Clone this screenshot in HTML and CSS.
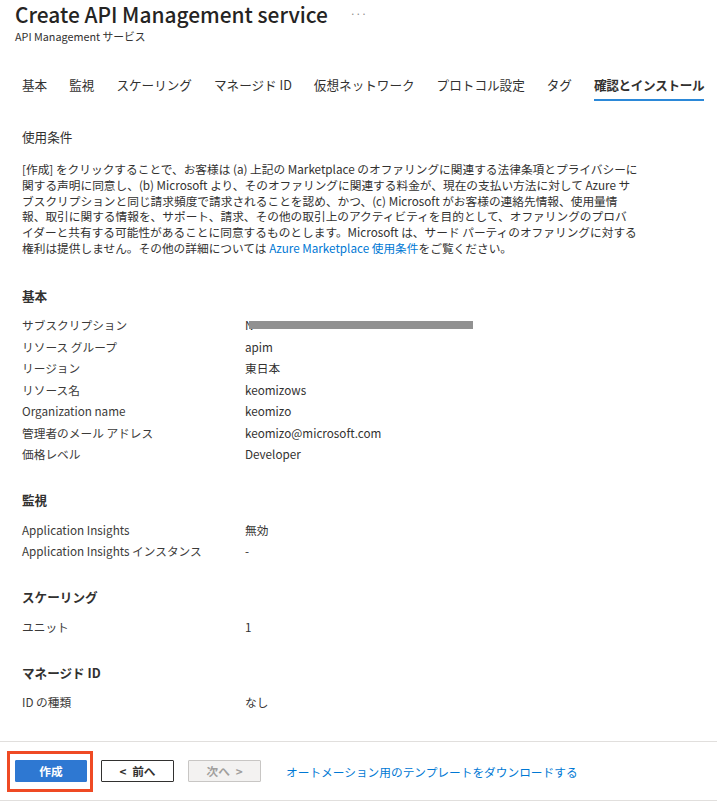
FILE: index.html
```html
<!DOCTYPE html>
<html lang="ja">
<head>
<meta charset="utf-8">
<title>Create API Management service</title>
<link rel="stylesheet" href="styles.css">
</head>
<body>
<div class="page">
  <header class="header">
    <div class="title-row">
      <h1 class="title">Create API Management service</h1>
      <span class="more">···</span>
    </div>
    <div class="subtitle">API Management サービス</div>
  </header>

  <nav class="tabs">
    <span class="tab">基本</span>
    <span class="tab">監視</span>
    <span class="tab">スケーリング</span>
    <span class="tab">マネージド ID</span>
    <span class="tab">仮想ネットワーク</span>
    <span class="tab">プロトコル設定</span>
    <span class="tab">タグ</span>
    <span class="tab active">確認とインストール</span>
  </nav>

  <main class="content">
    <div class="terms-title">使用条件</div>
    <p class="terms">[作成] をクリックすることで、お客様は (a) 上記の Marketplace のオファリングに関連する法律条項とプライバシーに<br>関する声明に同意し、(b) Microsoft より、そのオファリングに関連する料金が、現在の支払い方法に対して Azure サ<br>ブスクリプションと同じ請求頻度で請求されることを認め、かつ、(c) Microsoft がお客様の連絡先情報、使用量情<br>報、取引に関する情報を、サポート、請求、その他の取引上のアクティビティを目的として、オファリングのプロバ<br>イダーと共有する可能性があることに同意するものとします。Microsoft は、サード パーティのオファリングに対する<br>権利は提供しません。その他の詳細については <a class="link" href="#">Azure Marketplace 使用条件</a>をご覧ください。</p>

    <section class="section first">
      <h2 class="section-title">基本</h2>
      <div class="rows">
        <div class="label">サブスクリプション</div><div class="value"><span class="n">N</span><span class="redact"></span></div>
        <div class="label">リソース グループ</div><div class="value">apim</div>
        <div class="label">リージョン</div><div class="value">東日本</div>
        <div class="label">リソース名</div><div class="value">keomizows</div>
        <div class="label">Organization name</div><div class="value">keomizo</div>
        <div class="label">管理者のメール アドレス</div><div class="value">keomizo@microsoft.com</div>
        <div class="label">価格レベル</div><div class="value">Developer</div>
      </div>
    </section>

    <section class="section">
      <h2 class="section-title">監視</h2>
      <div class="rows">
        <div class="label">Application Insights</div><div class="value">無効</div>
        <div class="label">Application Insights インスタンス</div><div class="value">-</div>
      </div>
    </section>

    <section class="section">
      <h2 class="section-title">スケーリング</h2>
      <div class="rows">
        <div class="label">ユニット</div><div class="value">1</div>
      </div>
    </section>

    <section class="section">
      <h2 class="section-title">マネージド ID</h2>
      <div class="rows">
        <div class="label">ID の種類</div><div class="value">なし</div>
      </div>
    </section>
  </main>

  <footer class="footer">
    <div class="create-wrap">
      <button class="btn primary">作成</button>
      <span class="highlight"></span>
    </div>
    <button class="btn">&lt;&ensp;前へ</button>
    <button class="btn disabled">次へ&ensp;&gt;</button>
    <a class="link footer-link" href="#">オートメーション用のテンプレートをダウンロードする</a>
  </footer>
</div>
</body>
</html>
```

FILE: styles.css
```css
* { box-sizing: border-box; }

html, body {
  margin: 0;
  padding: 0;
  background: #ffffff;
}

body {
  font-family: "Noto Sans CJK JP", "Noto Sans", sans-serif;
  color: #323130;
  font-size: 11.7px;
}

.page {
  width: 717px;
  height: 803px;
  overflow: hidden;
}

.header {
  padding-left: 15px;
}

.title-row {
  display: flex;
  align-items: center;
  gap: 22px;
  padding-top: 1px;
}

.title {
  margin: 0;
  font-size: 20.9px;
  line-height: 26px;
  font-weight: 500;
  color: #252423;
  white-space: nowrap;
}

.more {
  font-size: 10px;
  color: #8a8886;
  line-height: 26px;
}

.subtitle {
  margin-top: 2px;
  font-size: 10.8px;
  line-height: 14px;
  color: #323130;
}

.tabs {
  display: flex;
  gap: 22px;
  margin-top: 28px;
  padding-left: 22px;
}

.tab {
  font-size: 12.6px;
  line-height: 28px;
  border-bottom: 2px solid transparent;
  white-space: nowrap;
  color: #323130;
}

.tab.active {
  font-weight: 700;
  border-bottom-color: #2b88d8;
  letter-spacing: -0.3px;
}

.content {
  padding-left: 22px;
}

.terms-title {
  margin-top: 28px;
  font-size: 12.6px;
  line-height: 16px;
}

.terms {
  margin: 16px 0 0;
  font-size: 11.7px;
  line-height: 15.8px;
  white-space: nowrap;
}

.link {
  color: #0078d4;
  text-decoration: none;
}

.section {
  margin-top: 26px;
}

.section.first {
  margin-top: 30px;
}

.section-title {
  margin: 0 0 8px;
  font-size: 12.6px;
  line-height: 20px;
  font-weight: 700;
}

.rows {
  display: grid;
  grid-template-columns: 223px 1fr;
  grid-auto-rows: 21.5px;
  align-items: center;
}

.label {
  color: #3b3a39;
  white-space: nowrap;
}

.value {
  color: #323130;
  white-space: nowrap;
  display: flex;
  align-items: center;
}

.n {
  color: #323130;
}

.redact {
  display: inline-block;
  width: 224px;
  height: 8px;
  margin-left: -4px;
  background: #919191;
  filter: blur(0.7px);
}

.footer {
  margin-top: 29px;
  border-top: 1px solid #e1dfdd;
  border-bottom: 1px solid #e1dfdd;
  padding: 18px 0 18px 15px;
  display: flex;
  align-items: center;
  gap: 14px;
}

.create-wrap {
  position: relative;
  display: flex;
}

.btn {
  width: 73px;
  height: 22px;
  padding: 0;
  font-family: inherit;
  font-size: 11.7px;
  font-weight: 700;
  line-height: 20px;
  background: #ffffff;
  border: 1px solid #323130;
  border-radius: 1px;
  color: #323130;
}

.btn.primary {
  width: 72px;
  background: #2e78d2;
  border-color: #2e78d2;
  color: #ffffff;
}

.btn.disabled {
  background: #f3f2f1;
  border-color: #c8c6c4;
  color: #a19f9d;
  font-weight: 600;
}

.highlight {
  position: absolute;
  left: -8px;
  top: -9px;
  width: 86px;
  height: 41px;
  border: 3.5px solid #ef4a24;
  pointer-events: none;
}

.footer-link {
  margin-left: 11px;
  font-size: 11.7px;
}
```
